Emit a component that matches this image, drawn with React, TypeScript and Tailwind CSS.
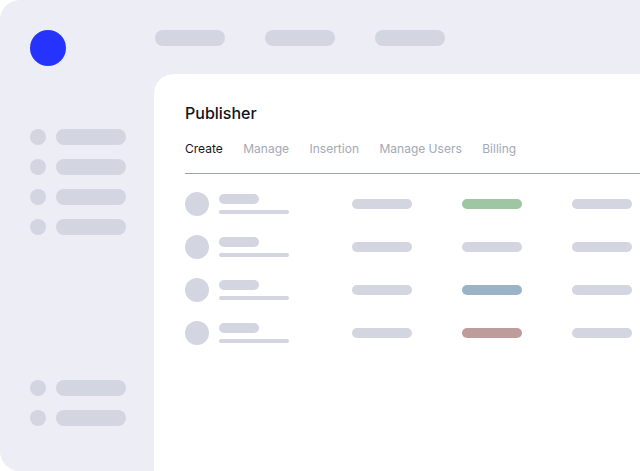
import React from 'react';

const Pill = ({ className }: { className: string }) => <div className={`rounded-full ${className}`} />;

const NavItem = () => (
    <div className="flex items-center gap-[10px]">
        <Pill className="w-4 h-4 bg-[#d3d5e0]" />
        <Pill className="w-[70px] h-4 bg-[#d3d5e0]" />
    </div>
);

const rows = ['bg-[#9fc6a2]', 'bg-[#d3d5e0]', 'bg-[#9bb3c7]', 'bg-[#bf9c9c]'];
const tabs = ['Manage', 'Insertion', 'Manage Users', 'Billing'];

const Row = ({ status }: { status: string }) => (
    <div className="flex items-center h-[43px]">
        <Pill className="w-6 h-6 bg-[#d3d5e0] shrink-0" />
        <div className="w-[143px] pl-[10px] shrink-0 flex flex-col gap-[6px]">
            <Pill className="w-10 h-[10px] bg-[#d3d5e0]" />
            <Pill className="w-[70px] h-1 bg-[#d3d5e0]" />
        </div>
        <Pill className="w-[60px] h-[10px] bg-[#d3d5e0] shrink-0" />
        <Pill className={`w-[60px] h-[10px] ml-[50px] shrink-0 ${status}`} />
        <Pill className="w-[60px] h-[10px] ml-[50px] bg-[#d3d5e0] shrink-0" />
    </div>
);

export default function App() {
    return (
        <div className="w-[640px] h-[471px] bg-white overflow-hidden font-['Inter',sans-serif]">
            <div className="w-full h-full flex bg-[#ecedf5] rounded-l-[20px]">
                <aside className="w-[154px] shrink-0 flex flex-col pt-[30px] pl-[30px] pb-[45px]">
                    <Pill className="w-9 h-9 bg-[#2633ff]" />
                    <div className="mt-[63px] flex flex-col gap-[14px]">
                        <NavItem />
                        <NavItem />
                        <NavItem />
                        <NavItem />
                    </div>
                    <div className="mt-auto flex flex-col gap-[14px]">
                        <NavItem />
                        <NavItem />
                    </div>
                </aside>
                <div className="flex-1 flex flex-col">
                    <div className="h-[74px] shrink-0 flex pt-[30px] pl-px gap-10">
                        <Pill className="w-[70px] h-4 bg-[#d3d5e0]" />
                        <Pill className="w-[70px] h-4 bg-[#d3d5e0]" />
                        <Pill className="w-[70px] h-4 bg-[#d3d5e0]" />
                    </div>
                    <main className="flex-1 bg-white rounded-tl-[20px] pl-[31px] pt-[29px]">
                        <h1 className="text-base leading-5 font-medium text-[#111218]">Publisher</h1>
                        <div className="mt-[16px] h-[35px] flex gap-[20.5px] pt-[1px] border-b border-[#9ca3af] text-xs leading-[18px]">
                            <span className="text-[#15161c]">Create</span>
                            {tabs.map(tab => (
                                <span key={tab} className="text-[#a3a9b5]">{tab}</span>
                            ))}
                        </div>
                        <div className="mt-[8px]">
                            {rows.map((status, i) => (
                                <Row key={i} status={status} />
                            ))}
                        </div>
                    </main>
                </div>
            </div>
        </div>
    );
}
